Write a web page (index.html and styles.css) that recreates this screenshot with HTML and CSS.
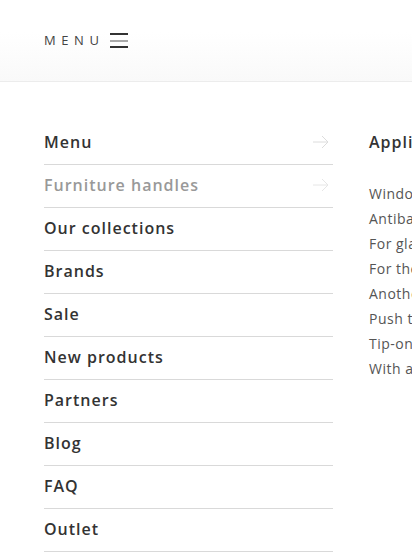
FILE: index.html
```html
<!DOCTYPE html>
<html lang="en">
<head>
<meta charset="utf-8">
<link rel="stylesheet" href="styles.css">
</head>
<body>
<header class="topbar">
  <div class="menu-toggle">
    <span class="menu-label">MENU</span>
    <span class="burger"><i class="l1"></i><i class="l2"></i><i class="l3"></i></span>
  </div>
</header>
<main class="panel">
  <nav class="main-nav">
    <a class="nav-item">Menu<svg class="arrow" viewBox="0 0 16 14"><path d="M0 7H15M9 1L15 7L9 13" fill="none" stroke="#dcdcdc" stroke-width="1"/></svg></a>
    <a class="nav-item muted">Furniture handles<svg class="arrow" viewBox="0 0 16 14"><path d="M0 7H15M9 1L15 7L9 13" fill="none" stroke="#e6e6e6" stroke-width="1"/></svg></a>
    <a class="nav-item">Our collections</a>
    <a class="nav-item">Brands</a>
    <a class="nav-item">Sale</a>
    <a class="nav-item">New products</a>
    <a class="nav-item">Partners</a>
    <a class="nav-item">Blog</a>
    <a class="nav-item">FAQ</a>
    <a class="nav-item">Outlet</a>
  </nav>
  <section class="sub">
    <h3 class="sub-title">Applications</h3>
    <ul class="sub-list">
      <li>Window handles</li>
      <li>Antibacterial handles</li>
      <li>For glass doors</li>
      <li>For the kitchen</li>
      <li>Another</li>
      <li>Push to open</li>
      <li>Tip-on</li>
      <li>With a light</li>
    </ul>
  </section>
</main>
</body>
</html>
```
FILE: styles.css
```css
* { box-sizing: border-box; }
html, body { margin: 0; padding: 0; background: #fff; overflow: hidden; }
body { font-family: "Open Sans", "Liberation Sans", sans-serif; color: #333; width: 412px; }
.topbar {
  height: 82px;
  background: linear-gradient(to bottom, #ffffff 0%, #ffffff 40%, #f9f9f9 100%);
  border-bottom: 1px solid #ececec;
  display: flex;
  align-items: flex-start;
  padding: 33px 0 0 44px;
}
.menu-toggle { display: flex; align-items: center; gap: 5px; }
.menu-label { font-size: 13px; letter-spacing: 5.6px; color: #444; line-height: 15px; }
.burger { display: flex; flex-direction: column; gap: 4.5px; width: 18px; }
.burger i { display: block; height: 2px; background: #333; }
.burger .l2 { background: #aaa; }
.panel { display: flex; padding: 40px 0 0 44px; gap: 36px; overflow: hidden; }
.main-nav { display: flex; flex-direction: column; width: 289px; flex: none; }
.nav-item {
  display: flex; align-items: center; justify-content: space-between;
  height: 43px; border-bottom: 1px solid #d9d9d9;
  font-size: 16px; font-weight: 600; letter-spacing: 1px; color: #333;
  padding-bottom: 3px;
}
.nav-item.muted { color: #999; }
.arrow { width: 16px; height: 14px; margin-right: 4px; }
.sub { flex: none; width: 260px; }
.sub-title { margin: 0; height: 43px; display: flex; align-items: center; font-size: 16px; font-weight: 600; letter-spacing: 1px; color: #333; padding-bottom: 3px; }
.sub-list { list-style: none; margin: 0; padding: 0; padding-top: 16px; }
.sub-list li { height: 25px; line-height: 25px; font-size: 14px; color: #555; letter-spacing: 0.5px; white-space: nowrap; }
```
